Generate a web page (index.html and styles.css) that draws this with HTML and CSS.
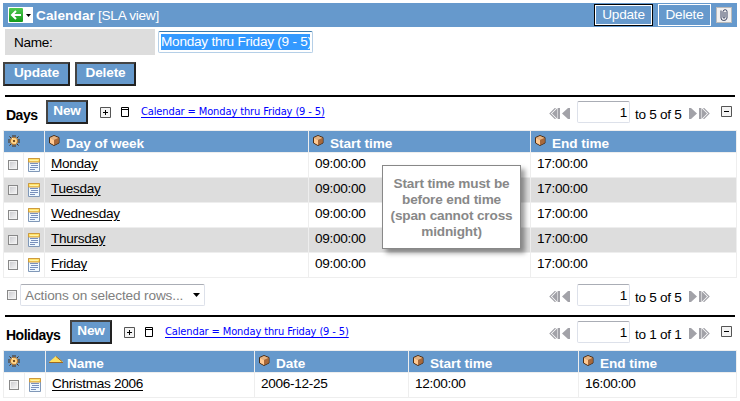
FILE: index.html
```
<!DOCTYPE html>
<html lang="en">
<head>
<meta charset="utf-8">
<title>Calendar</title>
<link rel="stylesheet" href="styles.css">
</head>
<body>
<svg class="defs" width="0" height="0">
  <symbol id="gear" viewBox="0 0 12 12"><path d="M5 0v12M7 0v12M0 5h12M0 7h12M1.500 1.500l9 9M10.500 1.500l-9 9" stroke="#4a2c10" stroke-width="1"/><circle cx="6" cy="6" r="3.600" fill="#ffd080" stroke="#b87830"/><path d="M4 3.500h1M7.500 4h1M3.500 7h1M7 8h1" stroke="#fff0c0"/><circle cx="6" cy="6" r="1.100" fill="#503010"/></symbol>
  <symbol id="box" viewBox="0 0 11 11"><path d="M5 .5L10 2.500V8L5 10.500.5 8V2.500z" fill="#c88850" stroke="#4a2c14"/><path d="M1 3l4-2 4.500 2L5 5z" fill="#e3b384"/><path d="M1 3l4 2v5L1 7.700z" fill="#ffc992"/><path d="M5 5l4.500-2v4.700L5 10z" fill="#a8683a"/></symbol>
  <symbol id="doc" viewBox="0 0 12 14"><path d="M.5.5h11v13H.5z" fill="#eff8ff" stroke="#8098b8"/><path d="M.5 4V.5h11V4z" fill="#ffe36a" stroke="#cf9a3c"/><path d="M2 2.500h8" stroke="#fff3a8"/><path d="M2 5.500h8M3 7.500h7M2 9.500h8M2 11.500h5" stroke="#7890bc"/></symbol>
  <symbol id="plus" viewBox="0 0 11 11"><path d="M.5.5h10v10H.5z" fill="#f4f4f4" stroke="#555"/><path d="M3 5.500h5M5.500 3v5" stroke="#000"/></symbol>
  <symbol id="minus" viewBox="0 0 11 11"><path d="M.5.5h10v10H.5z" fill="#f4f4f4" stroke="#555"/><path d="M3 5.500h5" stroke="#000"/></symbol>
  <symbol id="window" viewBox="0 0 8 10"><path d="M.5.5h7v9h-7zM0 2.500h8" fill="none" stroke="#000"/></symbol>
  <symbol id="prev" viewBox="0 0 22 11"><path d="M6.500 0L1 5.500 6.500 11" fill="none" stroke="#a2a2a8" stroke-width="1.100"/><path d="M8.500 0v11L3 5.500zM9 0h2v11H9zM19 0h2v11h-2L13 5.500z" fill="#a2a2a8"/></symbol>
</svg>

<header class="titlebar">
  <span class="back">
    <svg width="14" height="14" viewBox="0 0 14 14"><defs><linearGradient id="green" x1="0" y1="0" x2="0" y2="1"><stop offset="0" stop-color="#4fc84f"/><stop offset="1" stop-color="#129a1a"/></linearGradient></defs><rect width="14" height="14" rx="1" fill="url(#green)"/><path d="M7 3L3 7l4 4M3.500 7H12" fill="none" stroke="#fff" stroke-width="2"/></svg>
    <svg width="5" height="3" viewBox="0 0 5 3"><path d="M0 0h5L2.500 3z"/></svg>
  </span>
  <b class="title">Calendar</b><span class="view">[SLA view]</span>
  <span class="flat dark">Update</span>
  <span class="flat">Delete</span>
  <span class="clip"><svg width="8" height="12" viewBox="0 0 8 12"><path d="M1 1.500v7.500q0 2.500 2.800 2.500T7 9V2.500Q7 .7 5.200.7T3 2.500V8q0 1.200 1 1.200T5 8V3" fill="none" stroke="#3c4664"/></svg></span>
</header>

<div class="field">
  <label>Name:</label>
  <div class="input"><mark>Monday thru Friday (9 - 5)</mark></div>
</div>

<div class="actions">
  <button class="btn update">Update</button><button class="btn delete">Delete</button>
</div>

<section class="list days">
  <div class="toolbar">
    <h2>Days</h2><button class="btn new">New</button>
    <svg class="plus" width="11" height="11"><use href="#plus"/></svg><svg class="window" width="8" height="10"><use href="#window"/></svg>
    <a class="crumb" href="#">Calendar = Monday thru Friday (9 - 5)</a>
    <div class="pager"><svg width="22" height="11"><use href="#prev"/></svg><span class="page">1</span><span class="range">to 5 of 5</span><svg class="next" width="22" height="11"><use href="#prev"/></svg></div>
    <svg class="minus" width="11" height="11"><use href="#minus"/></svg>
  </div>
  <div class="table">
    <div class="row head"><div class="tools"><svg width="12" height="12"><use href="#gear"/></svg></div><div><svg width="11" height="11"><use href="#box"/></svg>Day of week</div><div><svg width="11" height="11"><use href="#box"/></svg>Start time</div><div><svg width="11" height="11"><use href="#box"/></svg>End time</div></div>
    <div class="row"><div><i class="check"></i></div><div><svg width="12" height="14"><use href="#doc"/></svg></div><div><u>Monday</u></div><div>09:00:00</div><div>17:00:00</div></div>
    <div class="row alt"><div><i class="check"></i></div><div><svg width="12" height="14"><use href="#doc"/></svg></div><div><u>Tuesday</u></div><div>09:00:00</div><div>17:00:00</div></div>
    <div class="row"><div><i class="check"></i></div><div><svg width="12" height="14"><use href="#doc"/></svg></div><div><u>Wednesday</u></div><div>09:00:00</div><div>17:00:00</div></div>
    <div class="row alt"><div><i class="check"></i></div><div><svg width="12" height="14"><use href="#doc"/></svg></div><div><u>Thursday</u></div><div>09:00:00</div><div>17:00:00</div></div>
    <div class="row"><div><i class="check"></i></div><div><svg width="12" height="14"><use href="#doc"/></svg></div><div><u>Friday</u></div><div>09:00:00</div><div>17:00:00</div></div>
    <div class="note">Start time must be<br>before end time<br>(span cannot cross<br>midnight)</div>
  </div>
  <div class="footer">
    <i class="check"></i>
    <div class="select"><span>Actions on selected rows...</span><svg width="7" height="4" viewBox="0 0 7 4"><path d="M0 0h7L3.500 4z"/></svg></div>
    <div class="pager"><svg width="22" height="11"><use href="#prev"/></svg><span class="page">1</span><span class="range">to 5 of 5</span><svg class="next" width="22" height="11"><use href="#prev"/></svg></div>
  </div>
</section>

<section class="list holidays">
  <div class="toolbar">
    <h2>Holidays</h2><button class="btn new">New</button>
    <svg class="plus" width="11" height="11"><use href="#plus"/></svg><svg class="window" width="8" height="10"><use href="#window"/></svg>
    <a class="crumb" href="#">Calendar = Monday thru Friday (9 - 5)</a>
    <div class="pager"><svg width="22" height="11"><use href="#prev"/></svg><span class="page">1</span><span class="range">to 1 of 1</span><svg class="next" width="22" height="11"><use href="#prev"/></svg></div>
    <svg class="minus" width="11" height="11"><use href="#minus"/></svg>
  </div>
  <div class="table">
    <div class="row head"><div class="tools"><svg width="12" height="12"><use href="#gear"/></svg></div><div class="sorted"><svg width="14" height="7" viewBox="0 0 14 7"><path d="M0 6l7-6 7 6z" fill="#ffe060"/><path d="M0 6.500h14M7 .5l6 5" stroke="#a06820" fill="none"/></svg>Name</div><div><svg width="11" height="11"><use href="#box"/></svg>Date</div><div><svg width="11" height="11"><use href="#box"/></svg>Start time</div><div><svg width="11" height="11"><use href="#box"/></svg>End time</div></div>
    <div class="row"><div><i class="check"></i></div><div><svg width="12" height="14"><use href="#doc"/></svg></div><div><u>Christmas 2006</u></div><div>2006-12-25</div><div>12:00:00</div><div>16:00:00</div></div>
  </div>
</section>
</body>
</html>
```
FILE: styles.css
```
* { box-sizing: border-box; }
body { margin: 0; padding: 3px 3px 0; width: 740px; background: #fff; font: 13.6px/15px "Liberation Sans", Arial, sans-serif; letter-spacing: -.3px; color: #000; white-space: nowrap; }
svg { display: block; flex: none; }
.defs { position: absolute; }
.titlebar { display: flex; align-items: center; width: 734px; height: 24px; padding-left: 5px; background: #69c; color: #fff; }
.back { display: flex; align-items: center; gap: 3px; width: 25px; height: 16px; padding-left: 1px; background: #fff; }
.title { margin-left: 3px; width: 62px; letter-spacing: .1px; }
.view { margin-right: auto; letter-spacing: -.25px; }
.flat { width: 53px; height: 22px; margin-right: 5px; border: 1px solid #fff; text-align: center; line-height: 19px; letter-spacing: -.2px; }
.flat.dark { width: 59px; border-color: #000; box-shadow: inset 0 0 0 1px #fff; }
.clip { display: flex; align-items: center; justify-content: center; width: 16px; height: 16px; margin-right: 5px; background: #f0f0f0; border: 1px solid #bbb; }
.field { display: flex; height: 26px; margin: 2px 0 7px 2px; }
.field label { width: 150px; padding: 6px 9px; background: #ddd; letter-spacing: -.3px; }
.input { width: 155px; height: 22px; margin: 2px 0 0 3px; padding: 2px; border: 1px solid #b5cfe7; border-top-color: #3d7bad; border-radius: 2px; }
.input mark { display: block; height: 16px; line-height: 16px; background: #39f; color: #fff; letter-spacing: -.24px; }
.actions { display: flex; gap: 5px; height: 33px; }
.btn { height: 24px; margin: 0; padding: 0 0 2px; border: 2px solid; border-color: #444 #222 #222 #444; background: #69c; color: #fff; font: bold 13.6px/18px "Liberation Sans", Arial, sans-serif; text-align: center; letter-spacing: -.15px; }
.update { width: 67px; }
.delete { width: 61px; }
.new { width: 42px; }
.toolbar { display: flex; height: 35px; margin: 0 0 0 2px; padding-top: 4px; border-top: 2px solid #000; width: 730px; }
.days { height: 220px; }
h2 { margin: 6px 0 0; padding-left: 1px; width: 41px; font-size: 14px; line-height: 16px; letter-spacing: -.5px; }
.holidays h2 { width: 65px; }
.toolbar .btn { margin-top: -1px; }
.plus { margin: 6px 0 0 12px; }
.window { margin: 6px 0 0 10px; }
.crumb { margin: 4px auto 0 12px; color: #00f; font: 11px/14px "DejaVu Sans Condensed", sans-serif; letter-spacing: -.12px; text-decoration: underline; text-underline-offset: 2px; }
.pager { display: flex; height: 22px; align-items: center; }
.page { width: 53px; height: 22px; margin-left: 6px; padding: 3px 2px; border: 1px solid #dde1ea; border-top-color: #aaadb5; border-radius: 2px; text-align: right; }
.range { width: 53px; margin-left: 5px; padding-top: 4px; }
.pager svg { margin-top: 2px; }
.next { transform: scaleX(-1); }
.minus { margin: 5px 3px 0 11px; }
.table { position: relative; width: 734px; border: 1px solid #eee; border-bottom: 0; }
.row { display: grid; grid-template-columns: 20px 21px 264px 222px 205px; height: 25px; border-bottom: 1px solid #eee; }
.row > div { border-right: 1px solid #eee; padding: 3px 0 0 6px; }
.row > div:last-child { border-right: 0; }
.row > div:first-child { padding: 7px 0 0 4px; }
.row:not(.head) > div:nth-child(2) { padding: 5px 0 0 4px; }
.alt { background: #ddd; }
.head { grid-template-columns: 41px 264px 222px 205px; height: 22px; background: #69c; color: #fff; font-weight: bold; letter-spacing: -.05px; }
.head > div { display: flex; padding: 5px 0 0 4px; }
.head > div:first-child { padding: 4px 0 0 4px; }
.head > div:not(.tools) svg { margin: -1px 6px 0 0; }
.holidays .row { grid-template-columns: 21px 21px 209px 154px 170px 157px; }
.holidays .head { grid-template-columns: 42px 209px 154px 170px 157px; }
.holidays .head > div.sorted { padding-left: 3px; }
.holidays .head > div.sorted svg { margin: 0 4px 0 0; }
.holidays .check { margin-left: 1px; }
u { text-underline-offset: 2px; }
.check { display: block; width: 10px; height: 10px; border: 1px solid #888; background: linear-gradient(135deg, #c8c8cc, #f8f8f8); box-shadow: inset 0 0 0 1px #f2f2f2; }
.note { position: absolute; left: 378px; top: 34px; width: 139px; height: 84px; padding-top: 10px; border: 1px solid #888; background: #fff; box-shadow: 4px 4px 5px rgba(0,0,0,.4); color: #888; font-weight: bold; line-height: 16px; text-align: center; letter-spacing: -.15px; }
.footer { display: flex; width: 707px; padding-top: 6px; }
.footer .check { margin: 6px 3px 0 4px; }
.select { display: flex; align-items: center; justify-content: space-between; width: 185px; height: 22px; padding: 0 4px; border: 1px solid #dde1ea; border-top-color: #aaadb5; border-radius: 2px; color: #808080; letter-spacing: -.13px; }
.footer .pager { margin-left: auto; }
```
